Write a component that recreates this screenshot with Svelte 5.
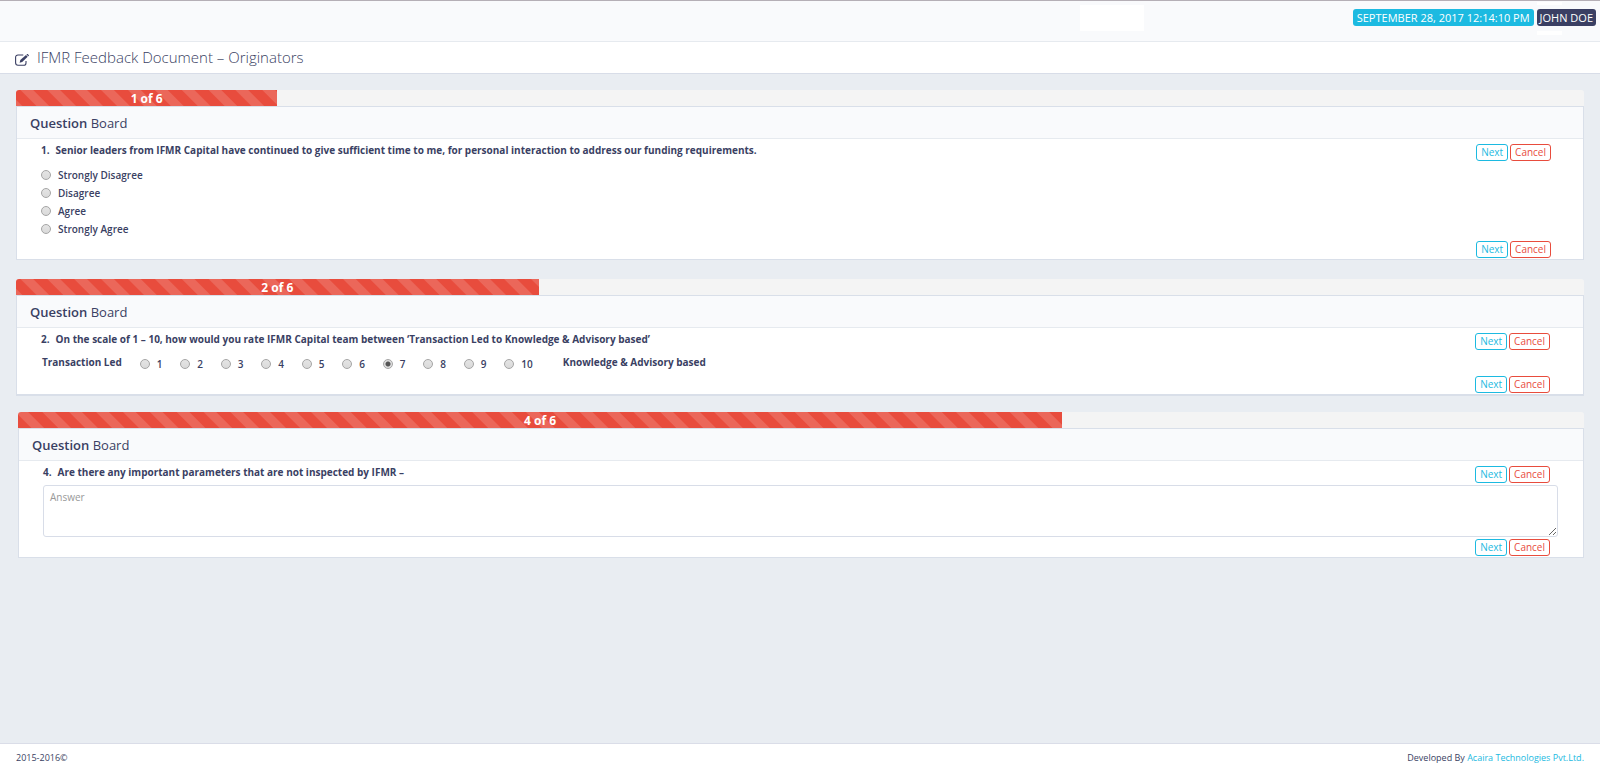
<script lang="ts">
  type Question = {
    number: number;
    text: string;
    kind: 'choice' | 'scale' | 'text';
  };

  const total = 6;
  const choices = ['Strongly Disagree', 'Disagree', 'Agree', 'Strongly Agree'];
  const scale = [1, 2, 3, 4, 5, 6, 7, 8, 9, 10];

  const questions: Question[] = [
    {
      number: 1,
      text: 'Senior leaders from IFMR Capital have continued to give sufficient time to me, for personal interaction to address our funding requirements.',
      kind: 'choice'
    },
    {
      number: 2,
      text: 'On the scale of 1 – 10, how would you rate IFMR Capital team between ‘Transaction Led to Knowledge & Advisory based’',
      kind: 'scale'
    },
    {
      number: 4,
      text: 'Are there any important parameters that are not inspected by IFMR –',
      kind: 'text'
    }
  ];

  let agreement = $state('');
  let rating = $state(7);
  let answer = $state('');

  function cancel() {
    agreement = '';
    rating = 7;
    answer = '';
  }
</script>

{#snippet actions()}
  <div class="actions">
    <button type="button" class="btn next">Next</button>
    <button type="button" class="btn cancel" onclick={cancel}>Cancel</button>
  </div>
{/snippet}

<div class="page">
  <header class="topbar">
    <div class="logo-slot"></div>
    <span class="badge date">SEPTEMBER 28, 2017 12:14:10 PM</span>
    <span class="badge user">JOHN DOE</span>
  </header>

  <div class="page-title">
    <svg class="edit-icon" viewBox="0 0 14 12" aria-hidden="true">
      <path d="M8.3 1H3C1.6 1 .6 1.9.6 3.2v5.6c0 1.4 1 2.5 2.4 2.5h5.6c1.4 0 2.4-1 2.4-2.4V7" fill="none" stroke="currentColor" stroke-width="1.1" />
      <path d="M4.6 8.8l.7-2.7L11 .9l1.7 1.8-5.5 5.4z" fill="currentColor" />
      <path d="M11.5.5l.5-.4c.3-.2.6-.2.9.1l.8.9c.3.3.2.6 0 .8l-.5.4z" fill="currentColor" />
    </svg>
    <h1>IFMR Feedback Document – Originators</h1>
  </div>

  <main>
    {#each questions as q}
      <section class="question {q.kind}">
        <div class="progress">
          <div class="bar" style="width: {(q.number / total) * 100}%">{q.number} of {total}</div>
        </div>
        <div class="card">
          <h2><strong>Question</strong> Board</h2>
          <div class="body">
            <div class="row">
              <p class="prompt" id="question-{q.number}"><span>{q.number}.</span>{q.text}</p>
              {@render actions()}
            </div>
            {#if q.kind === 'choice'}
              <div class="choices" role="radiogroup" aria-labelledby="question-{q.number}">
                {#each choices as choice}
                  <label>
                    <input type="radio" name="agreement" value={choice} bind:group={agreement} />
                    {choice}
                  </label>
                {/each}
              </div>
            {:else if q.kind === 'scale'}
              <div class="scale-row" role="radiogroup" aria-labelledby="question-{q.number}">
                <span class="end">Transaction Led</span>
                <div class="points">
                  {#each scale as point}
                    <label>
                      <input type="radio" name="rating" value={point} bind:group={rating} />
                      {point}
                    </label>
                  {/each}
                </div>
                <span class="end">Knowledge &amp; Advisory based</span>
              </div>
            {:else}
              <textarea placeholder="Answer" aria-labelledby="question-{q.number}" bind:value={answer}></textarea>
            {/if}
            {@render actions()}
          </div>
        </div>
      </section>
    {/each}
  </main>

  <footer>
    <span>2015-2016©</span>
    <span>Developed By <a href="#acaira">Acaira Technologies Pvt.Ltd.</a></span>
  </footer>
</div>

<style>
  :global(body) {
    margin: 0;
    background: #e9edf2;
  }

  .page {
    display: flex;
    flex-direction: column;
    min-height: 100vh;
    font-family: 'Open Sans', 'Noto Sans', sans-serif;
    font-size: 10px;
    color: #3a3f63;
  }

  .page * {
    box-sizing: border-box;
  }

  /* Header */
  .topbar {
    display: flex;
    align-items: flex-start;
    justify-content: flex-end;
    gap: 3px;
    height: 42px;
    padding: 4px 4px 0;
    background: #f9fafc;
    border-top: 1px solid #b5afb6;
    border-bottom: 1px solid #e6eaef;
  }

  .logo-slot {
    width: 64px;
    height: 26px;
    margin-right: 206px;
    background: #fff;
  }

  .badge {
    position: relative;
    height: 17px;
    margin-top: 4px;
    padding: 0 3px;
    border-radius: 3px;
    font-size: 11px;
    line-height: 17px;
    color: #fff;
    white-space: nowrap;
  }

  .date {
    padding: 0 4px;
    background: #1cbae1;
  }

  .user {
    background: #3a3f63;
  }

  .user::before,
  .user::after {
    content: '';
    position: absolute;
    left: 0;
    width: 25px;
    background: #fff;
  }

  .user::before {
    top: -7px;
    height: 3px;
  }

  .user::after {
    bottom: -9px;
    height: 4px;
  }

  .page-title {
    display: flex;
    align-items: center;
    gap: 8px;
    height: 32px;
    padding: 0 15px 2px;
    background: #fff;
    border-bottom: 1px solid #d8dde8;
  }

  .edit-icon {
    width: 14px;
    height: 12px;
    margin-top: 6px;
  }

  h1 {
    margin: 0;
    font-size: 15px;
    font-weight: 300;
    line-height: 20px;
  }

  /* Questions */
  main {
    flex: 1;
    padding: 16px 16px 0;
  }

  .question {
    margin-bottom: 19px;
  }

  .question.scale {
    margin-bottom: 16px;
  }

  .question.text {
    padding-left: 2px;
  }

  .progress {
    height: 16px;
    overflow: hidden;
    background: #f4f4f4;
    border-radius: 3px 3px 0 0;
  }

  .bar {
    height: 16px;
    background: repeating-linear-gradient(45deg, #eb675a 0 4px, #e84c3d 5px 14px, #eb675a 15px 19px);
    font-size: 12px;
    font-weight: 700;
    line-height: 17px;
    text-align: center;
    color: #fff;
  }

  .text .bar {
    background: repeating-linear-gradient(45deg, #e84c3d 0 9px, #eb675a 10px 18px, #e84c3d 19px);
  }

  .card {
    background: #fff;
    border: 1px solid #d9dfe9;
  }

  .scale .card {
    border-bottom-width: 2px;
  }

  h2 {
    height: 32px;
    margin: 0;
    padding: 0 13px;
    background: #f9fafc;
    border-bottom: 1px solid #e6eaef;
    font-size: 13px;
    font-weight: 400;
    line-height: 32px;
  }

  h2 strong {
    font-weight: 600;
  }

  .body {
    padding: 5px 33px 1px 24px;
  }

  .choice .body {
    padding-right: 32px;
  }

  .row {
    display: flex;
    justify-content: space-between;
  }

  .prompt {
    margin: 0;
    font-weight: 700;
    line-height: 13px;
  }

  .prompt span {
    margin-right: 6px;
  }

  .actions {
    display: flex;
    flex: none;
    justify-content: flex-end;
    gap: 2px;
  }

  .btn {
    height: 17px;
    padding: 0 4px;
    background: #fff;
    border: 1px solid;
    border-radius: 3px;
    font: inherit;
    line-height: 15px;
    cursor: pointer;
  }

  .next {
    color: #1cbae1;
    border-color: #1cbae1;
  }

  .cancel {
    color: #e84c3d;
    border-color: #e84c3d;
  }

  label {
    display: flex;
    align-items: center;
    gap: 7px;
    height: 18px;
    font-weight: 600;
  }

  input {
    appearance: none;
    flex: none;
    width: 10px;
    height: 10px;
    margin: 0;
    border: 1px solid #a5a5a5;
    border-radius: 50%;
    background: linear-gradient(#e4e4e4, #dadada);
  }

  input:checked {
    background: radial-gradient(circle, #555 0 2px, #dedede 3px);
  }

  .choices {
    padding: 5px 0 3px;
  }

  .scale-row {
    display: flex;
    gap: 18px;
    height: 26px;
    padding: 5px 0 0 1px;
  }

  .end {
    font-weight: 700;
    line-height: 15px;
  }

  .points {
    display: grid;
    grid-template-columns: repeat(10, 1fr);
    width: 405px;
  }

  textarea {
    display: block;
    width: calc(100% + 8px);
    height: 52px;
    margin: 2px 0;
    padding: 4px 6px;
    border: 1px solid #d8dde8;
    border-radius: 3px;
    font: inherit;
    color: inherit;
    resize: vertical;
  }

  textarea::placeholder {
    color: #999;
  }

  /* Footer */
  footer {
    display: flex;
    align-items: center;
    justify-content: space-between;
    height: 28px;
    padding: 0 16px;
    background: #fff;
    border-top: 1px solid #dadde8;
    font-size: 9px;
  }

  a {
    color: #1cbae1;
    text-decoration: none;
  }
</style>
